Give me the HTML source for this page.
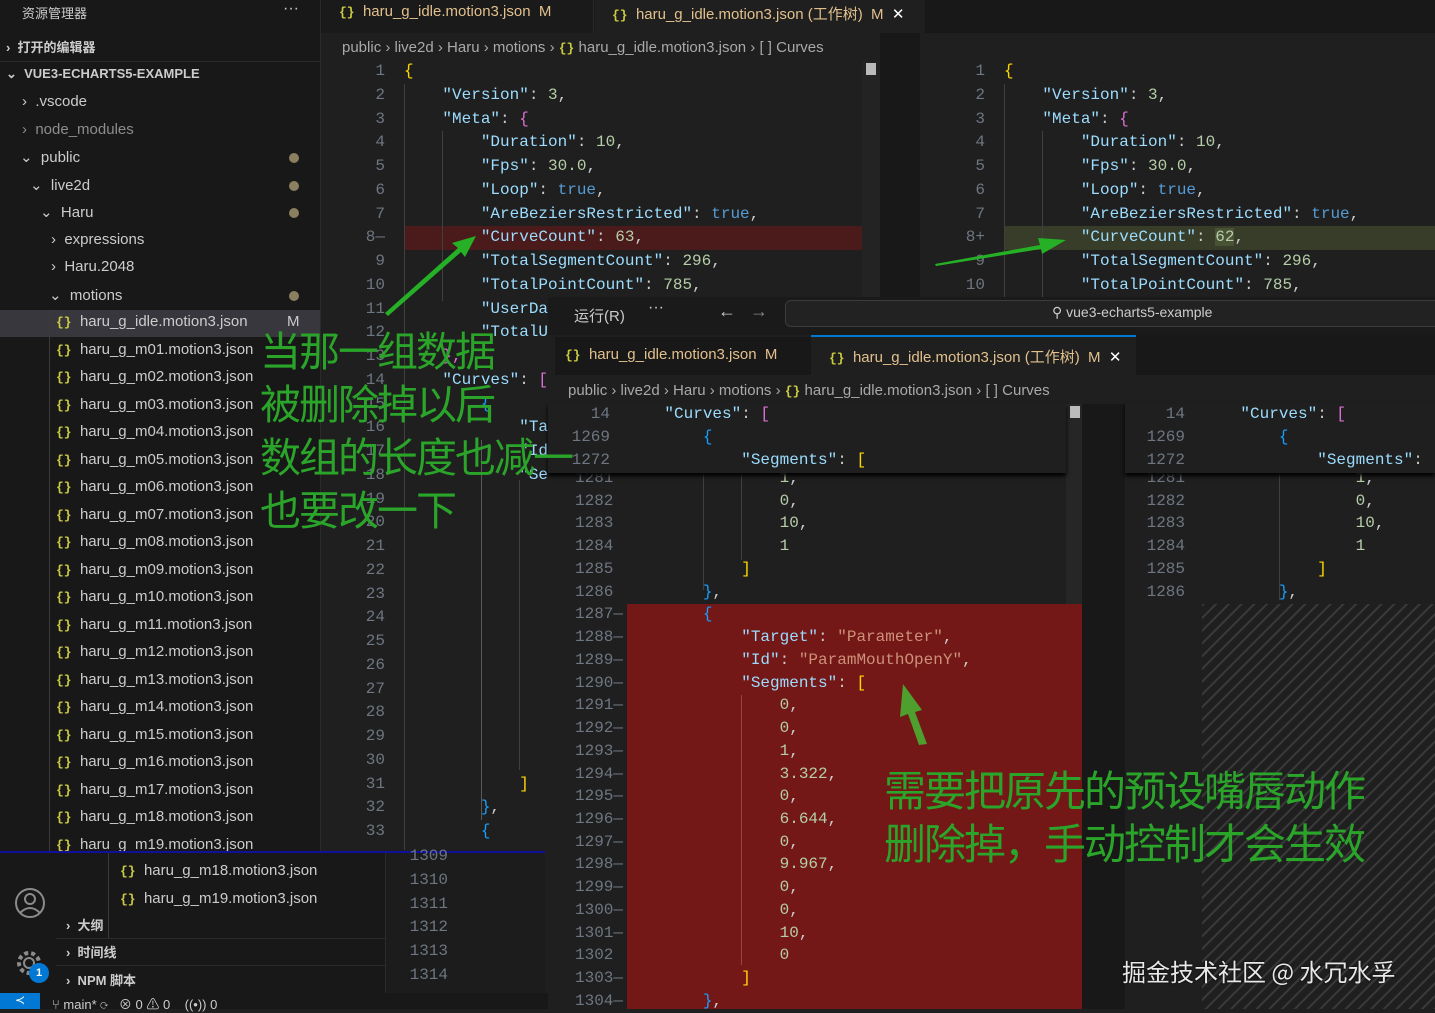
<!DOCTYPE html>
<html><head><meta charset="utf-8"><style>
*{margin:0;padding:0;box-sizing:border-box}
body{width:1435px;height:1009px;overflow:hidden;background:#1f1f1f;position:relative;font-family:"Liberation Sans","Noto Sans CJK SC",sans-serif;color:#cccccc}
.a{position:absolute}
.mono{font-family:"Liberation Mono","DejaVu Sans Mono",monospace;font-size:16px;white-space:pre}
.ln{color:#6e7681;text-align:right}
.k{color:#9cdcfe}.s{color:#ce9178}.n{color:#b5cea8}.b{color:#569cd6}.y{color:#ffd700}.p{color:#da70d6}.bl{color:#179fff}
.h{visibility:hidden}
.side div.it{position:absolute;font-size:15px;color:#cccccc;white-space:nowrap}
.mod{color:#e2c08d}
.br{color:#cbcb41;font-family:"Liberation Mono",monospace;font-weight:bold;font-size:13px}
.dot{position:absolute;width:10px;height:10px;border-radius:50%;background:#8a7f5e}
.ann{position:absolute;color:#2aa52a;font-family:"Noto Sans CJK SC",sans-serif;white-space:nowrap;letter-spacing:-2px}
</style></head><body>

<!-- Sidebar -->
<div class="a side" style="left:0;top:0;width:321px;height:851px;background:#181818;border-right:1px solid #2b2b2b">
  <div class="it" style="left:22px;top:3px;font-size:13px">资源管理器</div>
  <div class="it" style="left:283px;top:0px;font-size:16px">···</div>
  <div class="it" style="left:6px;top:37px;font-size:13px;font-weight:bold">›&nbsp; 打开的编辑器</div>
  <div class="a" style="left:0;top:61px;width:320px;height:1px;background:#2b2b2b"></div>
  <div class="it" style="left:6px;top:66px;font-size:13px;font-weight:bold">⌄&nbsp; VUE3-ECHARTS5-EXAMPLE</div>
  <div class="it" style="left:22px;top:93px">›&nbsp; .vscode</div>
  <div class="it" style="left:22px;top:121px;color:#8c8c8c">›&nbsp; node_modules</div>
  <div class="it mod" style="left:20px;top:148px">⌄&nbsp; public</div>
  <div class="it mod" style="left:30px;top:176px">⌄&nbsp; live2d</div>
  <div class="it mod" style="left:40px;top:203px">⌄&nbsp; Haru</div>
  <div class="it" style="left:51px;top:231px">›&nbsp; expressions</div>
  <div class="it" style="left:51px;top:258px">›&nbsp; Haru.2048</div>
  <div class="it mod" style="left:49px;top:286px">⌄&nbsp; motions</div>
  <div class="dot" style="left:289px;top:153px"></div>
  <div class="dot" style="left:289px;top:181px"></div>
  <div class="dot" style="left:289px;top:208px"></div>
  <div class="dot" style="left:289px;top:291px"></div>
  <div class="a" style="left:0;top:310px;width:320px;height:27px;background:#37373d"></div>
  <div class="a" style="left:49px;top:310px;width:1px;height:541px;background:#3a3a3a"></div>
  <div class="it mod" style="left:56px;top:313px"><span class="br">{}</span>&nbsp; haru_g_idle.motion3.json</div>
  <div class="it mod" style="left:287px;top:313px">M</div>
  <div class="it" style="left:56px;top:341px"><span class="br">{}</span>&nbsp; haru_g_m01.motion3.json</div>
  <div class="it" style="left:56px;top:368px"><span class="br">{}</span>&nbsp; haru_g_m02.motion3.json</div>
  <div class="it" style="left:56px;top:396px"><span class="br">{}</span>&nbsp; haru_g_m03.motion3.json</div>
  <div class="it" style="left:56px;top:423px"><span class="br">{}</span>&nbsp; haru_g_m04.motion3.json</div>
  <div class="it" style="left:56px;top:451px"><span class="br">{}</span>&nbsp; haru_g_m05.motion3.json</div>
  <div class="it" style="left:56px;top:478px"><span class="br">{}</span>&nbsp; haru_g_m06.motion3.json</div>
  <div class="it" style="left:56px;top:506px"><span class="br">{}</span>&nbsp; haru_g_m07.motion3.json</div>
  <div class="it" style="left:56px;top:533px"><span class="br">{}</span>&nbsp; haru_g_m08.motion3.json</div>
  <div class="it" style="left:56px;top:561px"><span class="br">{}</span>&nbsp; haru_g_m09.motion3.json</div>
  <div class="it" style="left:56px;top:588px"><span class="br">{}</span>&nbsp; haru_g_m10.motion3.json</div>
  <div class="it" style="left:56px;top:616px"><span class="br">{}</span>&nbsp; haru_g_m11.motion3.json</div>
  <div class="it" style="left:56px;top:643px"><span class="br">{}</span>&nbsp; haru_g_m12.motion3.json</div>
  <div class="it" style="left:56px;top:671px"><span class="br">{}</span>&nbsp; haru_g_m13.motion3.json</div>
  <div class="it" style="left:56px;top:698px"><span class="br">{}</span>&nbsp; haru_g_m14.motion3.json</div>
  <div class="it" style="left:56px;top:726px"><span class="br">{}</span>&nbsp; haru_g_m15.motion3.json</div>
  <div class="it" style="left:56px;top:753px"><span class="br">{}</span>&nbsp; haru_g_m16.motion3.json</div>
  <div class="it" style="left:56px;top:781px"><span class="br">{}</span>&nbsp; haru_g_m17.motion3.json</div>
  <div class="it" style="left:56px;top:808px"><span class="br">{}</span>&nbsp; haru_g_m18.motion3.json</div>
  <div class="it" style="left:56px;top:836px"><span class="br">{}</span>&nbsp; haru_g_m19.motion3.json</div>
</div>

<!-- Top tab bar -->
<div class="a" style="left:321px;top:0;width:1114px;height:33px;background:#181818"></div>
<div class="a" style="left:322px;top:0;width:272px;height:33px;background:#1a1a1a;border-right:1px solid #2b2b2b"></div>
<div class="a" style="left:339px;top:3px;font-size:15px;color:#e2c08d;white-space:nowrap"><span class="br">{}</span>&nbsp; haru_g_idle.motion3.json &nbsp;M</div>
<div class="a" style="left:595px;top:0;width:330px;height:33px;background:#1f1f1f"></div>
<div class="a" style="left:612px;top:3px;font-size:15px;color:#e2c08d;white-space:nowrap"><span class="br">{}</span>&nbsp; haru_g_idle.motion3.json (工作树) &nbsp;M &nbsp;<span style="color:#fff">✕</span></div>
<div class="a" style="left:342px;top:39px;font-size:15px;color:#a9a9a9;white-space:nowrap">public › live2d › Haru › motions › <span class="br">{}</span> haru_g_idle.motion3.json › [ ] Curves</div>

<!-- left pane -->
<div class="a" style="left:404px;top:226px;width:474px;height:24px;background:#4b1a1a"></div>
<div class="a" style="left:862px;top:60px;width:18px;height:790px;background:#232323"></div>
<div class="a" style="left:866px;top:63px;width:10px;height:12px;background:#bbb"></div>
<div class="a" style="left:880px;top:33px;width:40px;height:818px;background:#181818"></div>
<div class="a mono ln" style="left:330px;top:60px;width:55px;line-height:23.75px">1
2
3
4
5
6
7
8—
9
10
11
12
13
14
15
16
17
18
19
20
21
22
23
24
25
26
27
28
29
30
31
32
33</div>
<div class="a" style="left:404px;top:84px;width:1px;height:766px;background:#404040"></div>
<div class="a" style="left:442px;top:131px;width:1px;height:170px;background:#404040"></div>
<div class="a" style="left:481px;top:440px;width:1px;height:380px;background:#5a5a5a"></div>
<div class="a" style="left:519px;top:480px;width:1px;height:290px;background:#404040"></div>
<div class="a mono" style="left:404px;top:60px;line-height:23.75px"><span class="y">{</span>
    <span class="k">"Version"</span>: <span class="n">3</span>,
    <span class="k">"Meta"</span>: <span class="p">{</span>
        <span class="k">"Duration"</span>: <span class="n">10</span>,
        <span class="k">"Fps"</span>: <span class="n">30.0</span>,
        <span class="k">"Loop"</span>: <span class="b">true</span>,
        <span class="k">"AreBeziersRestricted"</span>: <span class="b">true</span>,
        <span class="k">"CurveCount"</span>: <span class="n">63</span>,
        <span class="k">"TotalSegmentCount"</span>: <span class="n">296</span>,
        <span class="k">"TotalPointCount"</span>: <span class="n">785</span>,
        <span class="k">"UserDa</span>
        <span class="k">"TotalU</span>
    <span class="p">},</span>
    <span class="k">"Curves"</span>: <span class="p">[</span>
        <span class="bl">{</span>
            <span class="k">"Ta</span>
            <span class="k">"Id</span>
            <span class="k">"Se</span>












            <span class="y">]</span>
        <span class="bl">}</span>,
        <span class="bl">{</span></div>

<!-- right pane -->
<div class="a" style="left:1004px;top:226px;width:431px;height:24px;background:#373d29"></div>
<div class="a mono ln" style="left:925px;top:60px;width:60px;line-height:23.75px">1
2
3
4
5
6
7
8+
9
10</div>
<div class="a" style="left:1004px;top:84px;width:1px;height:213px;background:#404040"></div>
<div class="a" style="left:1042px;top:131px;width:1px;height:166px;background:#404040"></div>
<div class="a mono" style="left:1004px;top:60px;line-height:23.75px"><span class="y">{</span>
    <span class="k">"Version"</span>: <span class="n">3</span>,
    <span class="k">"Meta"</span>: <span class="p">{</span>
        <span class="k">"Duration"</span>: <span class="n">10</span>,
        <span class="k">"Fps"</span>: <span class="n">30.0</span>,
        <span class="k">"Loop"</span>: <span class="b">true</span>,
        <span class="k">"AreBeziersRestricted"</span>: <span class="b">true</span>,
        <span class="k">"CurveCount"</span>: <span class="n" style="background:#4a5236">62</span>,
        <span class="k">"TotalSegmentCount"</span>: <span class="n">296</span>,
        <span class="k">"TotalPointCount"</span>: <span class="n">785</span>,</div>

<!-- overlay window -->
<div class="a" style="left:548px;top:297px;width:887px;height:712px;background:#1f1f1f"></div>
<div class="a" style="left:548px;top:297px;width:887px;height:38px;background:#1a1a1a"></div>
<div class="a" style="left:574px;top:305px;font-size:15px;color:#ccc">运行(R)</div>
<div class="a" style="left:648px;top:299px;font-size:16px;color:#ccc">···</div>
<div class="a" style="left:718px;top:301px;font-size:18px;color:#ccc">←</div>
<div class="a" style="left:750px;top:301px;font-size:18px;color:#888">→</div>
<div class="a" style="left:785px;top:300px;width:660px;height:27px;border:1px solid #3c3c3c;border-radius:6px;background:#222"></div>
<div class="a" style="left:1052px;top:304px;font-size:14px;color:#ccc;white-space:nowrap">⚲ vue3-echarts5-example</div>
<div class="a" style="left:555px;top:337px;width:256px;height:38px;background:#181818"></div>
<div class="a" style="left:565px;top:346px;font-size:15px;color:#e2c08d;white-space:nowrap"><span class="br">{}</span>&nbsp; haru_g_idle.motion3.json &nbsp;M</div>
<div class="a" style="left:811px;top:335px;width:325px;height:40px;background:#1f1f1f;border-top:2px solid #0078d4"></div>
<div class="a" style="left:829px;top:346px;font-size:15px;color:#e2c08d;white-space:nowrap"><span class="br">{}</span>&nbsp; haru_g_idle.motion3.json (工作树) &nbsp;M &nbsp;<span style="color:#fff">✕</span></div>
<div class="a" style="left:1136px;top:335px;width:299px;height:40px;background:#181818"></div>
<div class="a" style="left:568px;top:382px;font-size:15px;color:#a9a9a9;white-space:nowrap">public › live2d › Haru › motions › <span class="br">{}</span> haru_g_idle.motion3.json › [ ] Curves</div>

<!-- overlay red/hatch -->
<div class="a" style="left:627px;top:604px;width:455px;height:405px;background:#731717"></div>
<div class="a" style="left:1066px;top:404px;width:16px;height:200px;background:#262626"></div>
<div class="a" style="left:1070px;top:406px;width:10px;height:12px;background:#bbb"></div>
<div class="a" style="left:1082px;top:404px;width:43px;height:605px;background:#181818"></div>
<svg class="a" style="left:1202px;top:604px" width="233" height="405"><defs><pattern id="h" width="9" height="9" patternUnits="userSpaceOnUse" patternTransform="rotate(45)"><rect width="9" height="9" fill="#1f1f1f"/><rect width="2" height="9" fill="#3a3a3a"/></pattern></defs><rect width="233" height="405" fill="url(#h)"/></svg>

<div class="a mono ln" style="left:555px;top:467px;width:68px;line-height:22.73px">1281<span class="h">—</span>
1282<span class="h">—</span>
1283<span class="h">—</span>
1284<span class="h">—</span>
1285<span class="h">—</span>
1286<span class="h">—</span>
1287—
1288—
1289—
1290—
1291—
1292—
1293—
1294—
1295—
1296—
1297—
1298—
1299—
1300—
1301—
1302<span class="h">—</span>
1303—
1304—</div>
<div class="a" style="left:703px;top:470px;width:1px;height:120px;background:#404040"></div>
<div class="a" style="left:741px;top:470px;width:1px;height:90px;background:#404040"></div>
<div class="a" style="left:741px;top:695px;width:1px;height:270px;background:#a04040"></div>
<div class="a mono" style="left:626px;top:467px;line-height:22.73px">                <span class="n">1</span>,
                <span class="n">0</span>,
                <span class="n">10</span>,
                <span class="n">1</span>
            <span class="y">]</span>
        <span class="bl">}</span>,
        <span class="bl">{</span>
            <span class="k">"Target"</span>: <span class="s">"Parameter"</span>,
            <span class="k">"Id"</span>: <span class="s">"ParamMouthOpenY"</span>,
            <span class="k">"Segments"</span>: <span class="y">[</span>
                <span class="n">0</span>,
                <span class="n">0</span>,
                <span class="n">1</span>,
                <span class="n">3.322</span>,
                <span class="n">0</span>,
                <span class="n">6.644</span>,
                <span class="n">0</span>,
                <span class="n">9.967</span>,
                <span class="n">0</span>,
                <span class="n">0</span>,
                <span class="n">10</span>,
                <span class="n">0</span>
            <span class="y">]</span>
        <span class="bl">}</span>,</div>

<!-- overlay right pane -->
<div class="a mono ln" style="left:1125px;top:467px;width:60px;line-height:22.73px">1281
1282
1283
1284
1285
1286</div>
<div class="a" style="left:1279px;top:470px;width:1px;height:130px;background:#404040"></div>
<div class="a mono" style="left:1202px;top:467px;line-height:22.73px">                <span class="n">1</span>,
                <span class="n">0</span>,
                <span class="n">10</span>,
                <span class="n">1</span>
            <span class="y">]</span>
        <span class="bl">}</span>,</div>

<!-- sticky headers -->
<div class="a" style="left:548px;top:403px;width:518px;height:70px;background:#1f1f1f;box-shadow:0 3px 4px #000"></div>
<div class="a" style="left:1125px;top:403px;width:310px;height:70px;background:#1f1f1f;box-shadow:0 3px 4px #000"></div>
<div class="a mono ln" style="left:555px;top:403px;width:55px;line-height:23px">14
1269
1272</div>
<div class="a mono" style="left:626px;top:403px;line-height:23px">    <span class="k">"Curves"</span>: <span class="p">[</span>
        <span class="bl">{</span>
            <span class="k">"Segments"</span>: <span class="y">[</span></div>
<div class="a mono ln" style="left:1125px;top:403px;width:60px;line-height:23px">14
1269
1272</div>
<div class="a mono" style="left:1202px;top:403px;line-height:23px">    <span class="k">"Curves"</span>: <span class="p">[</span>
        <span class="bl">{</span>
            <span class="k">"Segments"</span>: <span class="y">[</span></div>

<!-- bottom-left overlay -->
<div class="a" style="left:0;top:851px;width:545px;height:158px;background:#181818;border-top:2px solid #10109a"></div>
<div class="a" style="left:385px;top:853px;width:160px;height:140px;background:#1c1c1c;border-left:1px solid #2b2b2b"></div>
<div class="a mono ln" style="left:390px;top:845px;width:58px;line-height:23.75px">1309
1310
1311
1312
1313
1314</div>
<div class="a" style="left:108px;top:853px;width:1px;height:86px;background:#3a3a3a"></div>
<div class="a" style="left:120px;top:862px;font-size:15px;white-space:nowrap"><span class="br">{}</span>&nbsp; haru_g_m18.motion3.json</div>
<div class="a" style="left:120px;top:890px;font-size:15px;white-space:nowrap"><span class="br">{}</span>&nbsp; haru_g_m19.motion3.json</div>
<div class="a" style="left:56px;top:938px;width:329px;height:1px;background:#2b2b2b"></div>
<div class="a" style="left:56px;top:965px;width:329px;height:1px;background:#2b2b2b"></div>
<div class="a" style="left:66px;top:915px;font-size:13px;font-weight:bold;white-space:nowrap">›&nbsp; 大纲</div>
<div class="a" style="left:66px;top:942px;font-size:13px;font-weight:bold;white-space:nowrap">›&nbsp; 时间线</div>
<div class="a" style="left:66px;top:970px;font-size:13px;font-weight:bold;white-space:nowrap">›&nbsp; NPM 脚本</div>
<svg class="a" style="left:12px;top:886px" width="36" height="36"><circle cx="18" cy="17" r="14" fill="none" stroke="#8b8b8b" stroke-width="2"/><circle cx="18" cy="13" r="5" fill="none" stroke="#8b8b8b" stroke-width="2"/><path d="M8 27 Q18 17 28 27" fill="none" stroke="#8b8b8b" stroke-width="2"/></svg>
<svg class="a" style="left:12px;top:946px" width="36" height="36"><circle cx="17" cy="17" r="10" fill="none" stroke="#8b8b8b" stroke-width="4" stroke-dasharray="4 3"/><circle cx="17" cy="17" r="5" fill="none" stroke="#8b8b8b" stroke-width="2"/></svg>
<div class="a" style="left:29px;top:963px;width:20px;height:20px;border-radius:50%;background:#0078d4;color:#fff;font-size:11px;font-weight:bold;text-align:center;line-height:20px">1</div>
<div class="a" style="left:0;top:993px;width:548px;height:16px;background:#181818"></div>
<div class="a" style="left:0;top:993px;width:40px;height:16px;background:#0078d4;color:#fff;font-size:12px;text-align:center">≺</div>
<div class="a" style="left:52px;top:994px;font-size:13px;color:#ccc;white-space:nowrap">⑂ main* ⟳ &nbsp; ⊗ 0 ⚠ 0 &nbsp; &nbsp;((•)) 0</div>

<!-- arrows -->
<svg class="a" style="left:0;top:0" width="1435" height="1009">
<polygon points="385,313 458,248 452,243 476,236 465,257 461,252 388,316" fill="#26b026"/>
<polygon points="935,264 1040,245 1038,238 1066,240 1042,254 1041,249 936,266" fill="#26b026"/>
<polygon points="927,744 915,712 922,710 903,684 900,717 908,714 919,745" fill="#4f9f2f"/>
</svg>

<!-- annotations -->
<div class="ann" style="left:260px;top:322px;font-size:41px;line-height:53px">当那一组数据<br>被删除掉以后<br>数组的长度也减一<br>也要改一下</div>
<div class="ann" style="left:884px;top:762px;font-size:42px;line-height:53px">需要把原先的预设嘴唇动作<br>删除掉，手动控制才会生效</div>
<div class="a" style="left:1122px;top:953px;font-size:24px;color:#e8e8e8;white-space:nowrap;font-family:'Noto Sans CJK SC',sans-serif;text-shadow:0 0 2px #000">掘金技术社区 @ 水冗水孚</div>
</body></html>
